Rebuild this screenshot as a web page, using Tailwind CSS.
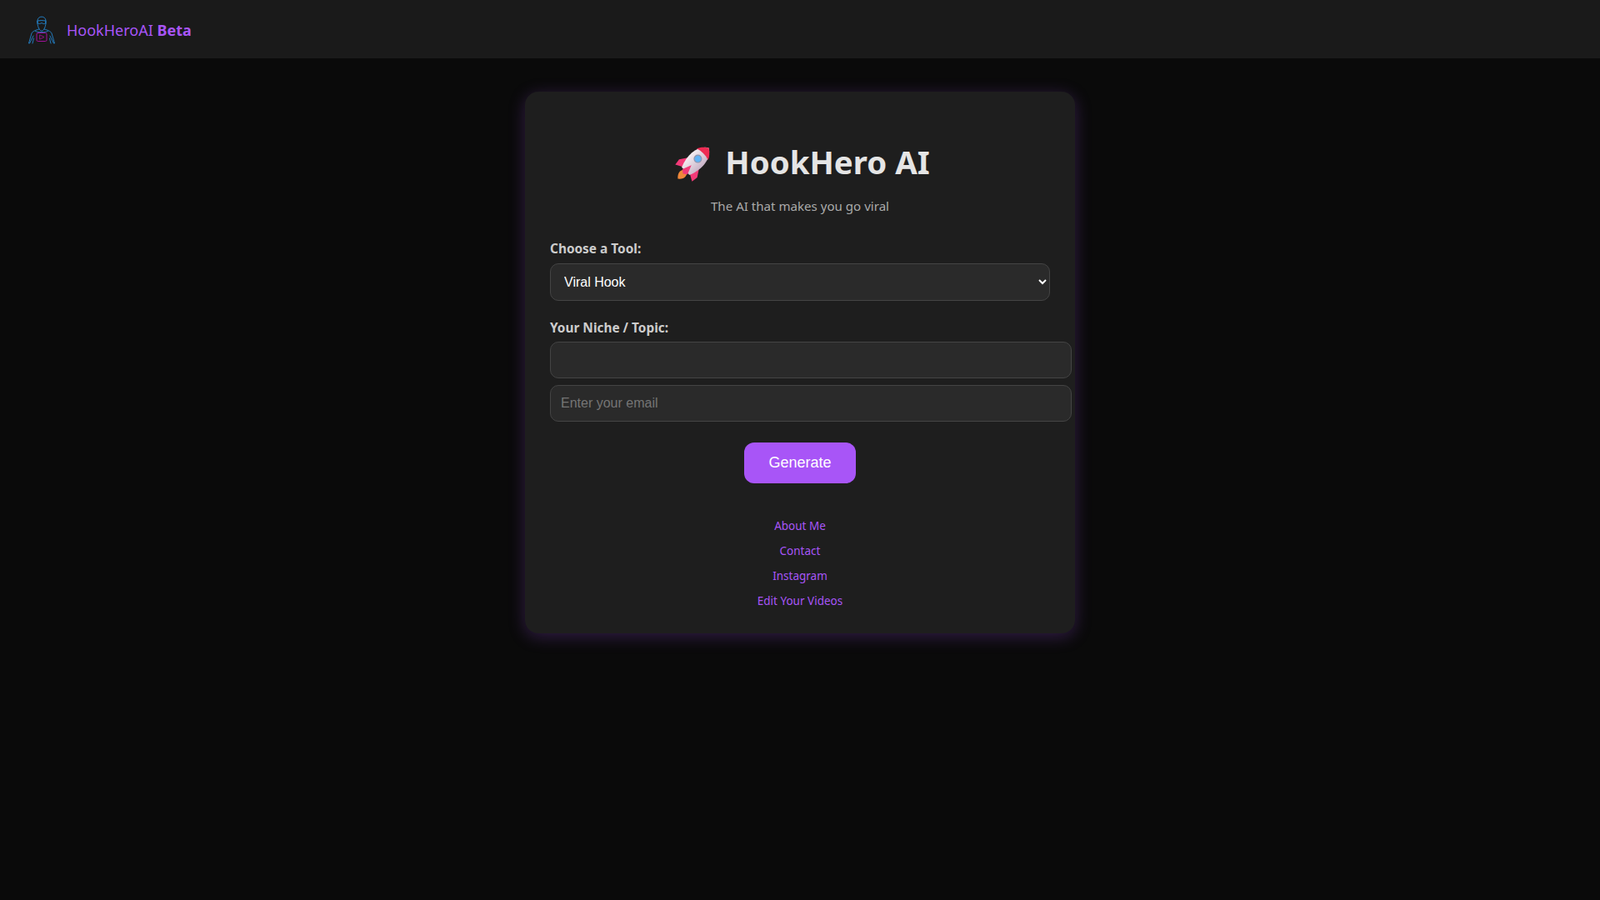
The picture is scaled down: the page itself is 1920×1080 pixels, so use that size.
<!DOCTYPE html>
<html lang="en">
<head>
  <meta charset="UTF-8" />
  <title>HookHero AI</title>
  <script src="https://cdn.jsdelivr.net/npm/@tailwindcss/browser@4"></script>
</head>
<body class="bg-[#0a0a0a] min-h-screen font-['Noto_Sans',sans-serif] text-[#e5e5e5]">

  <!-- top bar -->
  <header class="h-[70px] bg-[#1a1a1a] flex items-center pl-[30px]">
    <svg class="w-[40px] h-[40px]" viewBox="0 0 40 40" fill="none" stroke-linecap="round" stroke-linejoin="round">
      <g stroke="#2486cf" stroke-width="0.9">
        <path d="M15 13 V10 C15 3.5 25 3.5 25 10 V13" />
        <path d="M15 10 C17 9.5 23 9.5 25 10 L24.5 13 C23 14 21.5 13.5 20 12.5 C18.5 13.5 17 14 15.5 13 Z" />
        <path d="M15 13 C15.5 18 17.5 22 20 22 C22.5 22 24.5 18 25 13" />
        <path d="M17 20 C13 21 9 22.5 8 25 L4.5 37 H5.5 L10 28" />
        <path d="M23 20 C27 21 31 22.5 32 25 L35.5 37 H34.5 L30 28" />
        <path d="M9 37 L10.5 31 M31 37 L29.5 31" />
        <path d="M12.5 22.5 C15 24 25 24 27.5 22.5" />
      </g>
      <rect x="14" y="24.5" width="12" height="10" rx="1.5" stroke="#a3109c" stroke-width="1" />
      <path d="M18 27 L23 29.5 L18 32 Z" stroke="#a3109c" stroke-width="0.8" />
    </svg>
    <div class="ml-[10px] pt-[2px] text-[18px] text-[#a855f7]">HookHeroAI <b class="font-bold">Beta</b></div>
  </header>

  <!-- main card -->
  <main class="w-[660px] h-[650px] mx-auto mt-[40px] p-[30px] bg-[#1e1e1e] rounded-2xl shadow-[0_4px_20px_rgba(168,85,247,0.25)]">
    <h1 class="flex items-center justify-center mt-[28px] pl-[5px] h-[54px] text-[38.4px] font-bold text-[#e5e5e5]">
      <svg class="w-[46px] h-[46px] mr-[15px] mt-[2px]" viewBox="0 0 42 42">
        <defs>
          <linearGradient id="rocketBody" x1="0" y1="0" x2="1" y2="0">
            <stop offset="0" stop-color="#f4eef2" />
            <stop offset="1" stop-color="#c9b4c8" />
          </linearGradient>
        </defs>
        <g transform="rotate(45 21 21)">
          <path d="M21 30 C16 35 15 40 21 45 C27 40 26 35 21 30 Z" fill="#f0883a" />
          <path d="M13 20 L7 29 L8 36 L17 31 Z" fill="#f23a78" />
          <path d="M29 20 L35 29 L34 36 L25 31 Z" fill="#f23a78" />
          <path d="M21 -3 C31 3 33 18 27 33 H15 C9 18 11 3 21 -3 Z" fill="url(#rocketBody)" />
          <path d="M21 -3 C25.5 0 28.5 3.5 29.8 7 C24 5 18 5 12.2 7 C13.5 3.5 16.5 0 21 -3 Z" fill="#ee2b53" />
          <path d="M21 24 L25 34 L21 37 L17 34 Z" fill="#f23a78" />
          <circle cx="21" cy="14" r="4.6" fill="#8f97b0" />
          <circle cx="21" cy="14" r="3.4" fill="#62b4f5" />
        </g>
      </svg>
      HookHero AI
    </h1>
    <p class="mt-[14px] text-center text-[15.1px] leading-[22px] text-[#aaaaaa]">The AI that makes you go viral</p>

    <form class="mt-[30px]">
      <label class="block text-[15.4px] leading-[22px] font-bold text-[#cccccc]">Choose a Tool:</label>
      <select class="block mt-[6px] w-[600px] h-[45px] px-3 bg-[#2a2a2a] border border-[#444444] rounded-[10px] text-white text-[16px] font-['Liberation_Sans',sans-serif]">
        <option>Viral Hook</option>
      </select>

      <label class="block mt-[22px] text-[15.4px] leading-[22px] font-bold text-[#cccccc]">Your Niche / Topic:</label>
      <input type="text" class="box-content block mt-[5px] w-full h-[18px] py-3 px-3 bg-[#2a2a2a] border border-[#444444] rounded-[10px] text-white text-[16px] font-['Liberation_Sans',sans-serif]" />
      <input type="email" placeholder="Enter your email" class="box-content block mt-[8px] w-full h-[18px] py-3 px-3 bg-[#2a2a2a] border border-[#444444] rounded-[10px] text-white text-[16px] placeholder:text-[#757575] font-['Liberation_Sans',sans-serif]" />

      <div class="flex justify-center mt-[25px]">
        <button type="button" class="w-[134px] h-[49px] bg-[#a855f7] rounded-xl text-white text-[18px] font-['Liberation_Sans',sans-serif]">Generate</button>
      </div>
    </form>

    <nav class="mt-[41px] flex flex-col items-center gap-[10px] text-[13.5px] leading-[20px] text-[#a855f7]">
      <a href="#">About Me</a>
      <a href="#">Contact</a>
      <a href="#">Instagram</a>
      <a href="#">Edit Your Videos</a>
    </nav>
  </main>
</body>
</html>
